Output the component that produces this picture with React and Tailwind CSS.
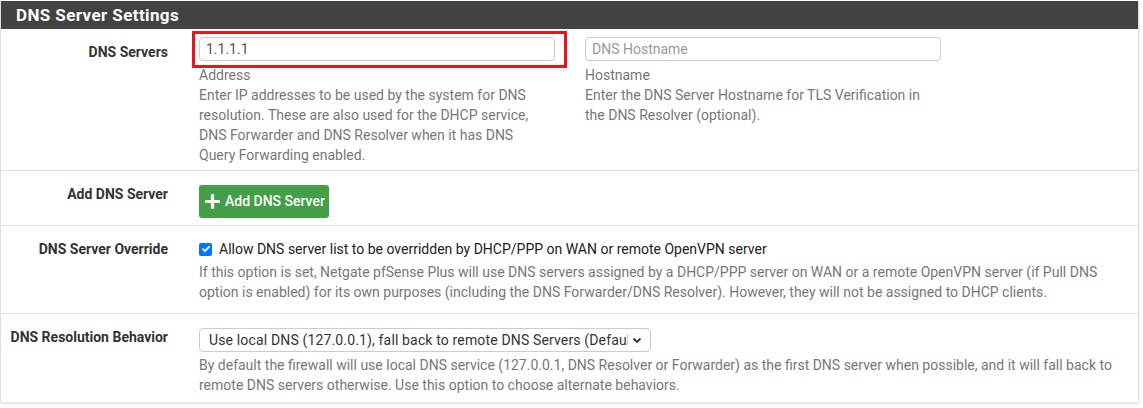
import React from "react";

const font = { fontFamily: "Roboto, 'Noto Sans', Arial, sans-serif" };

function Label({ children, className = "" }) {
  return (
    <div
      className={`w-[182px] shrink-0 pr-[15px] text-right text-[14px] leading-[20px] font-bold text-[#333333] ${className}`}
    >
      {children}
    </div>
  );
}

export default function App() {
  return (
    <div className="bg-white w-[1143px] h-[408px] pt-px" style={font}>
      <div className="w-[1139px] bg-white border-x border-[#dddddd] shadow-[0_2px_3px_rgba(0,0,0,0.12)]">
        <div className="h-[28px] bg-[#424242] px-[15px] text-white text-[17px] tracking-[0.4px] font-bold leading-[28px]">
          DNS Server Settings
        </div>

        {/* Row 1 */}
        <div className="flex border-b border-[#e0e0e0] h-[142px]">
          <Label className="pt-[13px]">DNS Servers</Label>
          <div className="pl-[16px] pt-[8px] flex gap-[30px] relative">
            <div className="w-[356px]">
              <div className="h-[24px] border border-[#cccccc] rounded-[4px] px-[6px] text-[14px] leading-[22px] text-[#555555]">
                1.1.1.1
              </div>
              <div className="mt-[4px] w-[340px] text-[14px] leading-[20px] text-[#777777]">
                Address
                <br />
                Enter IP addresses to be used by the system for DNS resolution. These are also used for the DHCP service, DNS Forwarder and DNS Resolver when it has DNS Query Forwarding enabled.
              </div>
            </div>
            <div className="w-[356px]">
              <div className="h-[24px] border border-[#cccccc] rounded-[4px] px-[6px] text-[14px] leading-[22px] text-[#999999]">
                DNS Hostname
              </div>
              <div className="mt-[4px] w-[345px] text-[14px] leading-[20px] text-[#777777]">
                Hostname
                <br />
                Enter the DNS Server Hostname for TLS Verification in the DNS Resolver (optional).
              </div>
            </div>
            <div className="absolute left-[9px] top-[2px] w-[375px] h-[37px] border-[3px] border-[#e8141c] pointer-events-none" />
          </div>
        </div>

        {/* Row 2 */}
        <div className="flex border-b border-[#e0e0e0] h-[55px]">
          <Label className="pt-[13px]">Add DNS Server</Label>
          <div className="pl-[16px] pt-[14px]">
            <div className="w-[130px] h-[33px] rounded-[3px] bg-[#43a047] flex items-center pl-[6px] gap-[5px] text-white text-[14px] font-medium">
              <svg width="15" height="15" viewBox="0 0 15 15">
                <path d="M7.5 1.5v12M1.5 7.5h12" stroke="white" strokeWidth="3.2" strokeLinecap="round" />
              </svg>
              <span>Add DNS Server</span>
            </div>
          </div>
        </div>

        {/* Row 3 */}
        <div className="flex border-b border-[#e0e0e0] h-[88px]">
          <Label className="pt-[13px]">DNS Server Override</Label>
          <div className="pl-[16px] pt-[13px] w-[941px]">
            <div className="flex items-center h-[20px] text-[14px] text-[#212121]">
              <span className="w-[13px] h-[13px] rounded-[2px] bg-[#0075ff] flex items-center justify-center mr-[7px]">
                <svg width="10" height="10" viewBox="0 0 10 10">
                  <path d="M2 5.2l2 2 4-4.4" stroke="white" strokeWidth="1.8" fill="none" strokeLinecap="round" strokeLinejoin="round" />
                </svg>
              </span>
              Allow DNS server list to be overridden by DHCP/PPP on WAN or remote OpenVPN server
            </div>
            <div className="mt-[3px] text-[14px] leading-[20px] text-[#777777] w-[925px]">
              If this option is set, Netgate pfSense Plus will use DNS servers assigned by a DHCP/PPP server on WAN or a remote OpenVPN server (if Pull DNS option is enabled) for its own purposes (including the DNS Forwarder/DNS Resolver). However, they will not be assigned to DHCP clients.
            </div>
          </div>
        </div>

        {/* Row 4 */}
        <div className="flex h-[88px]">
          <Label className="pt-[13px] whitespace-nowrap">DNS Resolution Behavior</Label>
          <div className="pl-[16px] pt-[14px] w-[941px]">
            <div className="w-[452px] h-[24px] border border-[#cccccc] rounded-[4px] flex items-center pl-[9px] pr-[8px] text-[14px] text-[#333333]">
              <span className="flex-1 overflow-hidden whitespace-nowrap leading-[22px] tracking-[0.15px]">
                Use local DNS (127.0.0.1), fall back to remote DNS Servers (Default)
              </span>
              <svg width="10" height="10" viewBox="0 0 10 10" className="ml-[4px] shrink-0">
                <path d="M1.5 3.5l3.5 3.5 3.5-3.5" stroke="#333" strokeWidth="1.8" fill="none" />
              </svg>
            </div>
            <div className="mt-[4px] text-[14px] leading-[19.5px] text-[#777777] w-[925px]">
              By default the firewall will use local DNS service (127.0.0.1, DNS Resolver or Forwarder) as the first DNS server when possible, and it will fall back to remote DNS servers otherwise. Use this option to choose alternate behaviors.
            </div>
          </div>
        </div>
      </div>
    </div>
  );
}
